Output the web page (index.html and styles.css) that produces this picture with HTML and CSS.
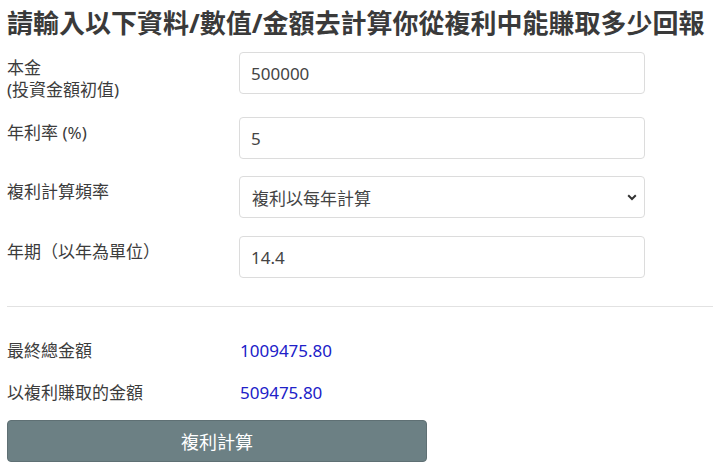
FILE: index.html
```html
<!DOCTYPE html>
<html lang="zh-Hant">
<head>
<meta charset="utf-8">
<link rel="stylesheet" href="styles.css">
</head>
<body>
<div class="page">
  <h1 class="title">請輸入以下資料/數值/金額去計算你從複利中能賺取多少回報</h1>
  <form class="calc">
    <div class="row">
      <label class="label">本金<br>(投資金額初值)</label>
      <input class="field" type="text" value="500000">
    </div>
    <div class="row">
      <label class="label">年利率 (%)</label>
      <input class="field" type="text" value="5">
    </div>
    <div class="row">
      <label class="label">複利計算頻率</label>
      <div class="select">
        <span class="select-text">複利以每年計算</span>
        <svg class="chev" width="10" height="7" viewBox="0 0 10 7"><path d="M1.2 1.3 L5 5 L8.8 1.3" fill="none" stroke="#333" stroke-width="2"/></svg>
      </div>
    </div>
    <div class="row">
      <label class="label">年期（以年為單位）</label>
      <input class="field" type="text" value="14.4">
    </div>
  </form>
  <div class="divider"></div>
  <div class="results">
    <div class="result">
      <span class="label">最終總金額</span>
      <span class="value">1009475.80</span>
    </div>
    <div class="result">
      <span class="label">以複利賺取的金額</span>
      <span class="value">509475.80</span>
    </div>
  </div>
  <button class="btn" type="button">複利計算</button>
</div>
</body>
</html>
```
FILE: styles.css
```css
html, body {
  margin: 0;
  padding: 0;
  background: #fff;
}
body {
  font-family: "Noto Sans", "Noto Sans CJK TC", sans-serif;
  font-size: 17px;
  color: #3a3a3a;
  overflow: hidden;
}
.page {
  padding: 0 0 0 7px;
}
.title {
  margin: 0;
  padding-top: 7px;
  font-size: 26px;
  line-height: 32px;
  font-weight: 700;
  letter-spacing: 0;
  color: #3a3a3a;
  white-space: nowrap;
}
.calc {
  margin-top: 13px;
}
.row {
  display: grid;
  grid-template-columns: 232px 406px;
  align-items: start;
  margin-bottom: 18px;
}
.row:first-child {
  margin-bottom: 16px;
}
.row:nth-child(2) {
  margin-bottom: 17px;
}
.row:last-child {
  margin-bottom: 0;
}
.label {
  display: block;
  padding-top: 5px;
  line-height: 22px;
  color: #3c3c3c;
}
.field, .select {
  box-sizing: border-box;
  height: 42px;
  width: 406px;
  border: 1px solid #dcdcdc;
  border-radius: 4px;
  padding: 0 11px;
  font-family: "Noto Sans", "Noto Sans CJK TC", sans-serif;
  font-size: 17px;
  color: #444;
  background: #fff;
  outline: none;
}
.select {
  display: flex;
  align-items: center;
  justify-content: space-between;
  padding-left: 12px;
  padding-right: 7px;
}
.select-text {
  color: #444;
}
.chev {
  display: block;
}
.divider {
  margin-top: 28px;
  height: 1px;
  background: #e2e2e2;
}
.results {
  padding-top: 32px;
}
.result {
  display: grid;
  grid-template-columns: 233px auto;
  height: 42px;
}
.result:last-child {
  height: 39px;
}
.result .label {
  padding-top: 1px;
}
.value {
  display: block;
  padding-top: 1px;
  line-height: 22px;
  color: #2020c8;
}
.btn {
  display: block;
  box-sizing: border-box;
  width: 420px;
  height: 42px;
  border: 1px solid #5f7074;
  border-radius: 4px;
  background: #6c8084;
  color: #fff;
  font-family: "Noto Sans", "Noto Sans CJK TC", sans-serif;
  font-size: 18px;
}
```
